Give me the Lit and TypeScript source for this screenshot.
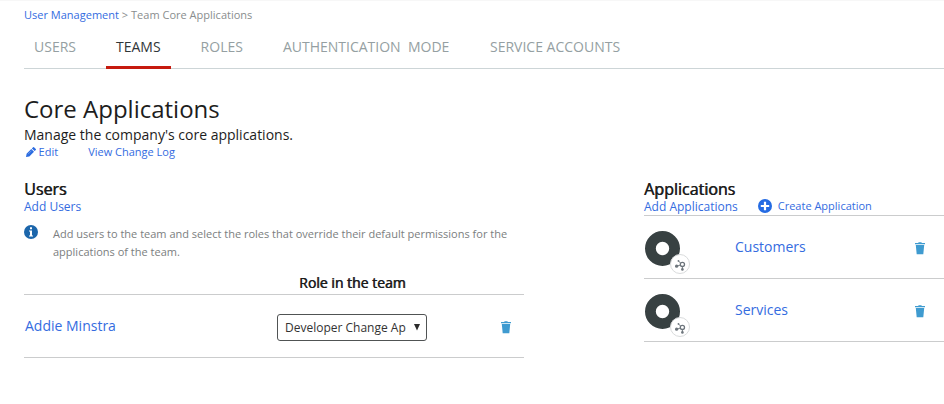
import { LitElement, html, css, svg } from "lit";
import { customElement } from "lit/decorators.js";
import { classMap } from "lit/directives/class-map.js";

const TABS = ["USERS", "TEAMS", "ROLES", "AUTHENTICATION\u00a0 MODE", "SERVICE ACCOUNTS"];
const ACTIVE_TAB = "TEAMS";
const APPLICATIONS = ["Customers", "Services"];

const trashIcon = html`<svg class="trash" width="10" height="13" viewBox="0 0 10 13">
  ${svg`<path d="M3.6 .2h2.8l.4.8H10v1.2H0V1h3.2zM.8 3h8.4L8.3 12.2H1.7z" fill="#3f9bd0"/>`}
</svg>`;

const pencilIcon = html`<svg class="pencil" width="10" height="10" viewBox="0 0 10 10">
  ${svg`<path d="M0 10l.6-3.3L5.3 2l2.7 2.7-4.7 4.7z" fill="#2a6be0"/>
  <path d="M5.9 1.4L7.1.2q.4-.4.9 0l1.8 1.8q.4.5 0 .9L8.6 4.1z" fill="#2a6be0"/>
  <path d="M2 7.2L5.6 3.6" stroke="#fff" stroke-width=".5" opacity=".6"/>`}
</svg>`;

const infoIcon = html`<svg class="info" width="14" height="14" viewBox="0 0 14 14">
  ${svg`<circle cx="7" cy="7" r="7" fill="#1c66ab"/>
  <path d="M6 2.3h2v2H6zM5 5.4h3v5h1v1.2H5v-1.2h1V6.6H5z" fill="#fff"/>`}
</svg>`;

const plusIcon = html`<svg class="plus" width="14" height="14" viewBox="0 0 14 14">
  ${svg`<circle cx="7" cy="7" r="7" fill="#246be3"/>
  <path d="M7 2.8v8.4M2.8 7h8.4" stroke="#fff" stroke-width="2.2"/>`}
</svg>`;

const appLogo = html`<svg class="logo" width="46" height="44" viewBox="0 0 46 44">
  ${svg`<circle cx="18.5" cy="17.5" r="12.1" fill="none" stroke="#384142" stroke-width="10.8"/>
  <circle cx="36" cy="33" r="9.5" fill="#fff" stroke="#d9dbdc"/>
  <path d="M32.5 35.2L38 33.6M34.4 29.9L38 33.6M38.4 33.6V38.3" stroke="#7a8287" stroke-width="1" fill="none"/>
  <circle cx="38.4" cy="33.4" r="2.1" fill="#fff" stroke="#6d757c" stroke-width="1.3"/>
  <circle cx="32.6" cy="35.2" r="1.6" fill="#6d757c"/>
  <circle cx="34.5" cy="29.9" r=".9" fill="#6d757c"/>
  <circle cx="38.4" cy="38.4" r="1.3" fill="#6d757c"/>`}
</svg>`;

@customElement("app-root")
export class AppRoot extends LitElement {
  static styles = css`
    :host {
      display: block;
      box-sizing: border-box;
      height: 404px;
      overflow: hidden;
      padding: 4px 0 0 24px;
      border-top: 1px solid #f7f7f7;
      background: #fff;
      color: #1d1d1d;
      font-family: "Open Sans", sans-serif;
      font-size: 14px;
      white-space: nowrap;
    }
    svg { display: block; flex: none; }
    a { color: #346cdf; text-decoration: none; }
    .crumbs { font-size: 11px; line-height: 20px; color: #898d8e; letter-spacing: 0.01px; }
    .tabs {
      display: flex;
      gap: 20px;
      height: 43px;
      border-bottom: 1px solid #cdd5d7;
      line-height: 43px;
      color: #959fa2;
    }
    .tab { padding: 0 10px; height: 41px; }
    .tab.active { color: #303638; border-bottom: 3px solid #c61a0e; }
    .tab:last-child { padding-left: 10.6px; }
    .title { margin: 25px 0 0; font-size: 24px; font-weight: 400; line-height: 30px; }
    .subtitle { line-height: 20px; margin-top: 1px; }
    .actions { display: flex; font-size: 11px; line-height: 14px; }
    .actions a { display: flex; }
    .pencil { margin: 2px 2.6px 0 2px; }
    .log { margin-left: 30px; }
    .columns { display: grid; grid-template-columns: 500px 300px; column-gap: 120px; margin-top: 19px; }
    .heading { margin: 0; font-size: 16px; font-weight: 400; line-height: 22px; text-shadow: 0.6px 0 #1d1d1d; }
    .links { display: flex; height: 15px; font-size: 12px; line-height: 14px; }
    .create { display: flex; gap: 6px; margin-left: 20px; font-size: 11px; line-height: 12px; }
    .plus { margin-top: -1px; }
    .hint { display: flex; margin-top: 10px; gap: 15px; font-size: 11px; line-height: 18px; color: #7b7e80; }
    .role-head {
      margin-top: 11px;
      padding-left: 275px;
      height: 22px;
      line-height: 22px;
      text-shadow: 0.6px 0 #1d1d1d;
    }
    .row {
      display: grid;
      align-items: center;
      box-sizing: border-box;
      height: 63px;
      border-top: 1px solid #cbcccd;
    }
    .row a { margin-bottom: 2px; }
    .row:last-child { height: 64px; border-bottom: 1px solid #cbcccd; }
    .user { grid-template-columns: 252px 224px 1fr; padding-left: 1px; }
    .user .trash { margin-top: 3px; }
    .app { grid-template-columns: 91px 180px 1fr; }
    .app .trash { margin-top: 2px; }
    .logo { align-self: start; margin-top: 15px; }
    .select {
      display: flex;
      justify-content: space-between;
      box-sizing: border-box;
      width: 150px;
      height: 27px;
      margin-top: 3px;
      padding: 0 6px 0 7px;
      border: 1px solid #505354;
      border-radius: 3px;
      font-size: 12px;
      line-height: 26px;
      color: #333;
    }
    .clip { width: 121px; overflow: hidden; }
    .arrow { margin-top: 9px; }
  `;

  render() {
    return html`
      <nav class="crumbs"><a>User Management</a> &gt; Team Core Applications</nav>
      <nav class="tabs">
        ${TABS.map((t) => html`<div class=${classMap({ tab: true, active: t === ACTIVE_TAB })}>${t}</div>`)}
      </nav>
      <h1 class="title">Core Applications</h1>
      <div class="subtitle">Manage the company's core applications.</div>
      <div class="actions"><a>${pencilIcon}Edit</a><a class="log">View Change Log</a></div>
      <div class="columns">
        <section>
          <h2 class="heading">Users</h2>
          <div class="links"><a>Add Users</a></div>
          <div class="hint">
            ${infoIcon}
            <div>Add users to the team and select the roles that override their default permissions for the<br />applications of the team.</div>
          </div>
          <div class="role-head">Role in the team</div>
          <div class="row user">
            <a>Addie Minstra</a>
            <div class="select">
              <span class="clip">Developer Change Ap</span>
              <svg class="arrow" width="6" height="7" viewBox="0 0 6 7"><path d="M0 0h6L3 6.5z" fill="#2b2b2b" /></svg>
            </div>
            ${trashIcon}
          </div>
        </section>
        <section>
          <h2 class="heading">Applications</h2>
          <div class="links">
            <a>Add Applications</a>
            <a class="create">${plusIcon}Create Application</a>
          </div>
          ${APPLICATIONS.map((name) => html`<div class="row app">${appLogo}<a>${name}</a>${trashIcon}</div>`)}
        </section>
      </div>
    `;
  }
}
